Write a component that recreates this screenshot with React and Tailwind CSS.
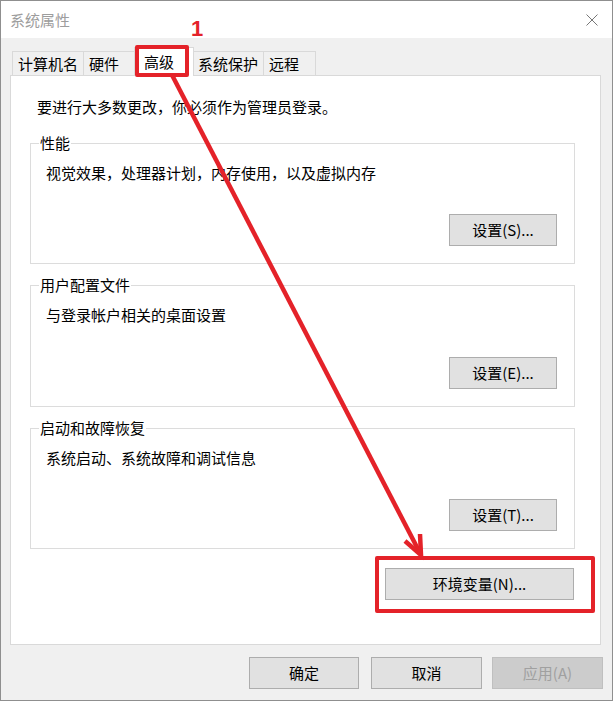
import React from "react";

const RED = "#e42229";

function Btn({ children, className = "", disabled = false }) {
  return (
    <div
      className={
        "flex items-center justify-center h-[32px] border text-[15px] leading-[20px] " +
        (disabled
          ? "bg-[#cccccc] border-[#bfbfbf] text-[#a0a0a0] "
          : "bg-[#e1e1e1] border-[#adadad] text-black ") +
        className
      }
    >
      {children}
    </div>
  );
}

function Group({ label, text, button, h }) {
  return (
    <div className={"relative border border-[#dcdcdc] w-[545px] flex flex-col " + h}>
      <span className="absolute left-[8px] -top-[11px] px-[1px] bg-white leading-[20px] text-[15px]">
        {label}
      </span>
      <div className="pl-[15px] pt-[19px] leading-[20px] text-[15px]">{text}</div>
      <div className="mt-auto mb-[17px] mr-[17px] self-end">
        <Btn className="w-[108px]">{button}</Btn>
      </div>
    </div>
  );
}

function Tab({ children, selected, className }) {
  return (
    <div
      className={
        "flex items-center border-l border-t border-r border-[#d9d9d9] text-[15px] leading-[20px] " +
        (selected
          ? "relative z-10 bg-white h-[29px] -mb-px pl-[9px] "
          : "bg-[#f0f0f0] h-[24px] pl-[5px] ") +
        className
      }
    >
      {children}
    </div>
  );
}

export default function App() {
  return (
    <div className="relative w-[613px] h-[702px] bg-white font-['Noto_Sans_CJK_SC','Liberation_Sans',sans-serif] text-black">
      <div className="w-[613px] h-[701px] border border-[#8f8f8f] flex flex-col">
        {/* title bar */}
        <div className="h-[37px] bg-white flex items-center justify-between pl-[9px] pr-[14px]">
          <span className="text-[15px] leading-[20px] text-[#9d9d9d]">系统属性</span>
          <svg width="12" height="12" viewBox="0 0 12 12" className="mt-[1px]">
            <path d="M0.5 0.5 L11.5 11.5 M11.5 0.5 L0.5 11.5" stroke="#777" strokeWidth="1" fill="none" />
          </svg>
        </div>
        {/* body */}
        <div className="flex-1 bg-[#f0f0f0] flex flex-col pt-[9px]">
          <div className="flex items-end ml-[11px] h-[28px]">
            <Tab className="w-[72px]">计算机名</Tab>
            <Tab className="w-[53px] -ml-px">硬件</Tab>
            <Tab selected className="w-[60px] -ml-[2px]">高级</Tab>
            <Tab className="w-[72px] -ml-[2px]">系统保护</Tab>
            <Tab className="w-[53px] -ml-px">远程</Tab>
          </div>
          <div className="ml-[9px] w-[591px] h-[570px] bg-white border border-[#d9d9d9] flex flex-col pl-[19px]">
            <div className="pt-[21px] pl-[7px] text-[15px] leading-[20px]">
              要进行大多数更改，你必须作为管理员登录。
            </div>
            <div className="mt-[26px]">
              <Group
                label="性能"
                text="视觉效果，处理器计划，内存使用，以及虚拟内存"
                button="设置(S)..."
                h="h-[121px]"
              />
            </div>
            <div className="mt-[21px]">
              <Group
                label="用户配置文件"
                text="与登录帐户相关的桌面设置"
                button="设置(E)..."
                h="h-[122px]"
              />
            </div>
            <div className="mt-[21px]">
              <Group
                label="启动和故障恢复"
                text="系统启动、系统故障和调试信息"
                button="设置(T)..."
                h="h-[121px]"
              />
            </div>
            <div className="mt-[19px] self-end mr-[26px]">
              <Btn className="w-[189px]">环境变量(N)...</Btn>
            </div>
          </div>
          <div className="mt-[12px] flex justify-end pr-[9px]">
            <Btn className="w-[110px]">确定</Btn>
            <Btn className="w-[111px] ml-[12px]">取消</Btn>
            <Btn disabled className="w-[111px] ml-[10px]">应用(A)</Btn>
          </div>
        </div>
      </div>

      {/* annotations */}
      <div className="absolute left-[135px] top-[45px] w-[54px] h-[32px] border-4 border-[#e42229] rounded-[2px] z-20" />
      <div className="absolute left-[375px] top-[556px] w-[220px] h-[57px] border-4 border-[#e42229] rounded-[2px] z-20" />
      <div className="absolute left-[191px] top-[18px] text-[22px] leading-[22px] font-bold font-['Liberation_Sans',sans-serif] text-[#e42229] z-20">
        1
      </div>
      <svg className="absolute left-0 top-0 pointer-events-none z-30" width="613" height="702">
        <line x1="172" y1="75" x2="420" y2="553" stroke={RED} strokeWidth="4.5" />
        <polyline
          points="405,541 421,555 420,534"
          stroke={RED}
          strokeWidth="4.5"
          fill="none"
          strokeLinejoin="miter"
          strokeLinecap="butt"
        />
      </svg>
    </div>
  );
}
